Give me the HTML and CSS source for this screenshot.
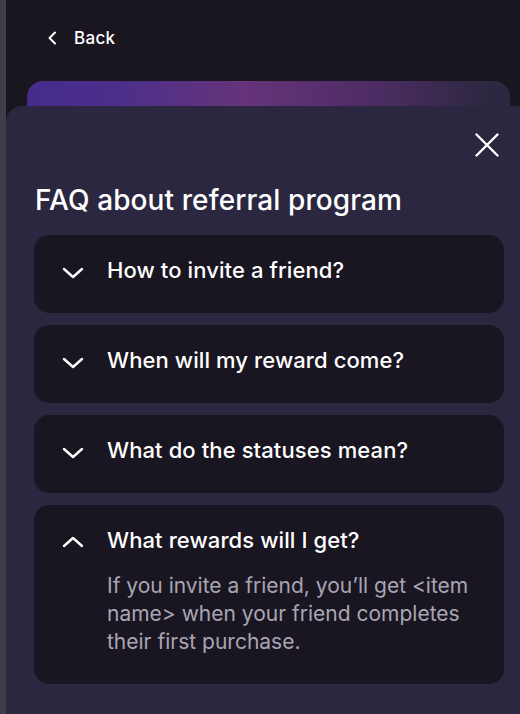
FILE: index.html
```html
<!DOCTYPE html>
<html lang="en">
<head>
    <meta charset="UTF-8">
    <meta name="viewport" content="width=device-width, initial-scale=1.0">
    <title>Referral program FAQ</title>
    <link rel="stylesheet" href="styles.css">
</head>
<body>
    <div class="app">
        <div class="side-strip"></div>
        <div class="screen">
            <a href="#" class="back-link">
                <svg width="10" height="14" viewBox="0 0 10 14"><path d="M8 1.5 2.5 7 8 12.5" fill="none" stroke="#fff" stroke-width="2" stroke-linecap="round" stroke-linejoin="round"/></svg>
                <span>Back</span>
            </a>
            <div class="promo-card"></div>

            <!-- bottom sheet over the page -->
            <div class="sheet">
                <div class="sheet-top">
                    <button class="sheet-close" title="Close">
                        <svg width="24" height="24" viewBox="0 0 24 24"><path d="M1.5 1.5 22.5 22.5M22.5 1.5 1.5 22.5" fill="none" stroke="#fff" stroke-width="2.4" stroke-linecap="round"/></svg>
                    </button>
                </div>
                <h2 class="sheet-title">FAQ about referral program</h2>
                <div class="faq-list">
                    <div class="faq-item">
                        <div class="faq-question">
                            <svg class="faq-chevron" width="22" height="12" viewBox="0 0 22 12"><path d="M2 2 11 10 20 2" fill="none" stroke="#fff" stroke-width="2.4" stroke-linecap="round" stroke-linejoin="round"/></svg>
                            <span>How to invite a friend?</span>
                        </div>
                    </div>
                    <div class="faq-item">
                        <div class="faq-question">
                            <svg class="faq-chevron" width="22" height="12" viewBox="0 0 22 12"><path d="M2 2 11 10 20 2" fill="none" stroke="#fff" stroke-width="2.4" stroke-linecap="round" stroke-linejoin="round"/></svg>
                            <span>When will my reward come?</span>
                        </div>
                    </div>
                    <div class="faq-item">
                        <div class="faq-question">
                            <svg class="faq-chevron" width="22" height="12" viewBox="0 0 22 12"><path d="M2 2 11 10 20 2" fill="none" stroke="#fff" stroke-width="2.4" stroke-linecap="round" stroke-linejoin="round"/></svg>
                            <span>What do the statuses mean?</span>
                        </div>
                    </div>
                    <div class="faq-item open">
                        <div class="faq-question">
                            <svg class="faq-chevron" width="22" height="12" viewBox="0 0 22 12"><path d="M2 10 11 2 20 10" fill="none" stroke="#fff" stroke-width="2.4" stroke-linecap="round" stroke-linejoin="round"/></svg>
                            <span>What rewards will I get?</span>
                        </div>
                        <p class="faq-answer">If you invite a friend, you’ll get &lt;item name&gt; when your friend completes their first purchase.</p>
                    </div>
                </div>
            </div>
        </div>
    </div>
</body>
</html>
```

FILE: styles.css
```css
html, body { margin: 0; height: 100%; }
body { font-family: Inter, "Noto Sans", sans-serif; background-color: #19161f; color: #fff; overflow: hidden; }
.app { display: flex; height: 100%; }
.side-strip { width: 6px; background-color: #3e3d48; flex-shrink: 0; }
.screen { flex: 1; position: relative; padding: 0 10px 0 21px; }

.back-link { display: flex; align-items: center; gap: 17px; padding: 28px 0 0 20px; color: #fff; text-decoration: none; font-size: 17px; font-weight: 500; letter-spacing: 0.3px; }
.back-link svg { display: block; }

.promo-card { margin-top: 33px; height: 80px; border-radius: 16px; background: linear-gradient(90deg, #452c8c 0%, #4d2f8a 20%, #66337a 45%, #4f2d66 70%, #2d2841 95%); }

.sheet { position: absolute; top: 106px; left: 0; right: -20px; bottom: -20px; background-color: #2c2740; border-radius: 16px 16px 0 0; padding: 0 41px 0 28px; }
.sheet-top { display: flex; justify-content: flex-end; padding-top: 27px; }
.sheet-close { background: none; border: none; padding: 0; cursor: pointer; display: block; }
.sheet-close svg { display: block; }
.sheet-title { margin: 26px 0 18px 1px; font-size: 28px; font-weight: 500; line-height: 34px; letter-spacing: 0.1px; }

.faq-list { display: flex; flex-direction: column; gap: 12px; margin-right: -5px; }
.faq-item { background-color: #1a1621; border-radius: 15px; padding: 21px 20px 29px 28px; }
.faq-item.open { padding-bottom: 28px; }
.faq-question { display: flex; align-items: center; gap: 23px; font-size: 22px; font-weight: 550; line-height: 28px; letter-spacing: 0.1px; }
.faq-chevron { display: block; flex-shrink: 0; margin-top: 5px; }
.faq-item.open .faq-chevron { margin-top: 3px; }
.faq-answer { margin: 18px 0 0 45px; font-size: 21px; line-height: 28px; color: #a9a5b3; }
```
